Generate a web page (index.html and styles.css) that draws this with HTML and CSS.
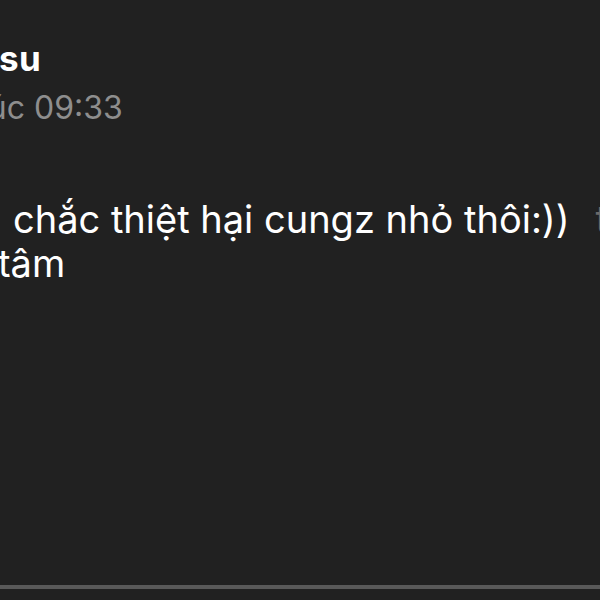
FILE: index.html
```html
<!DOCTYPE html>
<html lang="vi">
<head>
<meta charset="utf-8">
<link rel="stylesheet" href="styles.css">
</head>
<body>
<div class="screen">
  <div class="message">
    <div class="sender">su</div>
    <div class="time">lúc 09:33</div>
    <div class="body">
      <p class="line first">chắc thiệt hại cungz nhỏ thôi:))<span class="edge">t</span></p>
      <p class="line">tâm</p>
    </div>
  </div>
  <div class="divider"></div>
</div>
</body>
</html>
```

FILE: styles.css
```css
html, body {
  margin: 0;
  padding: 0;
  background: #212121;
}
.screen {
  width: 600px;
  height: 600px;
  overflow: hidden;
  display: flex;
  flex-direction: column;
  background: #212121;
  font-family: Inter, "Noto Sans", "Liberation Sans", sans-serif;
  color: #ffffff;
}
.message {
  flex: 1;
  padding-top: 33px;
  white-space: nowrap;
  overflow: hidden;
}
.sender {
  font-size: 35px;
  font-weight: 700;
  line-height: 50px;
  margin-left: -1px;
  letter-spacing: 0.5px;
}
.time {
  font-size: 32px;
  line-height: 50px;
  color: #8e8e8e;
  margin-left: -20px;
}
.body {
  margin-top: 64px;
  font-size: 38px;
  line-height: 44px;
}
.line {
  margin: 0;
  margin-left: -2px;
}
.first {
  margin-left: 13px;
}
.edge {
  color: #6a6a6a;
  margin-left: 26px;
}
.divider {
  height: 4px;
  background: #595959;
  margin-bottom: 11px;
}
```
